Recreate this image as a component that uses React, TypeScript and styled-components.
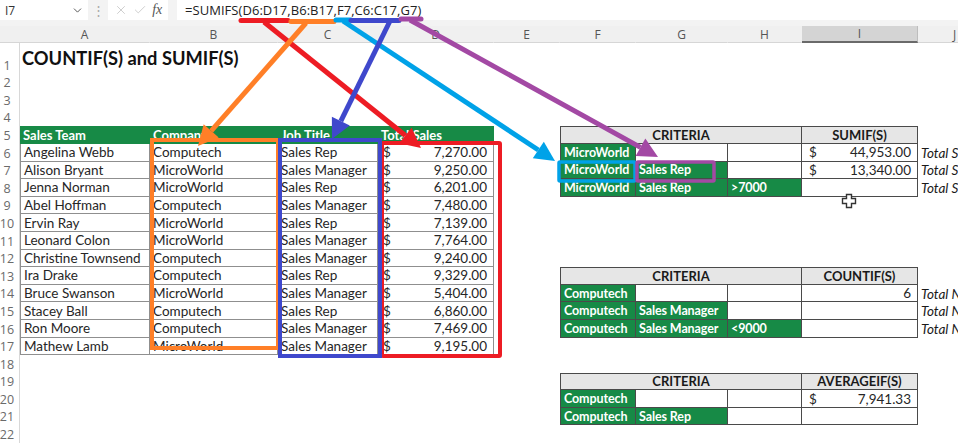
import React from "react";
import styled, { createGlobalStyle } from "styled-components";
import { ChevronDown, X, Check } from "lucide-react";

const Global = createGlobalStyle`
  html, body { margin: 0; padding: 0; background: #fff; overflow: hidden; }
  body { font-family: "Lato", "Open Sans", sans-serif; }
`;

const COLS = [20, 130, 128, 100, 116, 66, 76, 92, 74, 116, 74];
const LETTERS = ["A", "B", "C", "D", "E", "F", "G", "H", "I", "J"];

const Page = styled.div`
  position: relative;
  width: 958px;
  height: 448px;
  overflow: hidden;
  background: #fff;
`;

const TopBar = styled.div`
  height: 26px;
  background: #f3f3f3;
  display: flex;
  align-items: flex-start;
  font-family: "Open Sans", "Liberation Sans", sans-serif;
`;

const NameBox = styled.div`
  width: 88px;
  height: 20px;
  background: #fff;
  display: flex;
  align-items: center;
  justify-content: space-between;
  padding: 0 4px 0 5px;
  box-sizing: border-box;
  font-size: 12px;
  color: #333;
`;

const Dots = styled.div`
  width: 20px;
  height: 20px;
  display: flex;
  align-items: center;
  justify-content: center;
  color: #a8a8a8;
  font-size: 13px;
`;

const FnBox = styled.div`
  width: 60px;
  height: 20px;
  background: #fff;
  display: flex;
  align-items: center;
  justify-content: space-around;
  padding: 0 3px;
  box-sizing: border-box;
  color: #c4c4c4;
`;

const Fx = styled.span`
  font-family: "Liberation Serif", serif;
  font-style: italic;
  font-size: 14px;
  color: #555;
`;

const FormulaBox = styled.div`
  flex: 1;
  margin-left: 9px;
  height: 20px;
  background: #fff;
  display: flex;
  align-items: center;
  padding-left: 8px;
  font-size: 13px;
  color: #222;
  letter-spacing: 0.05px;
`;

const Sheet = styled.div`
  display: grid;
  grid-template-columns: ${COLS.map((c) => c + "px").join(" ")};
  grid-template-rows: 17px 30.6px repeat(21, 17.6px);
  width: 992px;
  font-family: "Lato", "Open Sans", sans-serif;
`;

const ColHead = styled.div<{ $c: number; $sel?: boolean }>`
  grid-row: 1;
  grid-column: ${(p) => p.$c};
  background: ${(p) => (p.$sel ? "#d4d4d4" : "#f0f0f0")};
  border-bottom: ${(p) => (p.$sel ? "2px solid #6a6a6a" : "1px solid #d6d6d6")};
  border-right: 1px solid ${(p) => (p.$sel ? "#bdbdbd" : "#f0f0f0")};
  display: flex;
  align-items: center;
  justify-content: center;
  font-size: 12px;
  color: #555;
  font-family: "Open Sans", sans-serif;
`;

const Corner = styled.div`
  grid-row: 1;
  grid-column: 1;
  background: #f0f0f0;
  border-bottom: 1px solid #d6d6d6;
`;

const RowHead = styled.div<{ $r: number }>`
  grid-row: ${(p) => p.$r + 1};
  grid-column: 1;
  border-right: 1px solid #d8d8d8;
  display: flex;
  align-items: flex-end;
  justify-content: center;
  padding: 0 5px 0 0;
  font-size: 12.5px;
  color: #6a6a6a;
  font-family: "Open Sans", sans-serif;
`;

const Title = styled.div`
  grid-row: 2;
  grid-column: 2 / span 4;
  display: flex;
  align-items: center;
  padding-left: 2px;
  font-weight: 700;
  font-size: 18.3px;
  color: #111;
  white-space: nowrap;
`;

const Cell = styled.div<{ $r: number; $c: number; $span?: number }>`
  grid-row: ${(p) => p.$r + 1};
  grid-column: ${(p) => p.$c + 1} / span ${(p) => p.$span ?? 1};
  display: flex;
  align-items: center;
  box-sizing: border-box;
  font-size: 13.5px;
  white-space: nowrap;
  overflow: hidden;
`;

const TableHead = styled(Cell)`
  background: #178a46;
  color: #fff;
  font-weight: 700;
  font-size: 13px;
  padding-left: 3px;
`;

const DataCell = styled(Cell)<{ $first?: boolean }>`
  color: #262626;
  padding-left: 3px;
  border-bottom: 1px solid #8f8f8f;
  border-right: 1px solid #8f8f8f;
  border-left: ${(p) => (p.$first ? "1px solid #8f8f8f" : "none")};
`;

const Money = styled(DataCell)`
  justify-content: space-between;
  padding: 0 6px 0 5px;
`;

const CritHead = styled(Cell)<{ $first?: boolean }>`
  background: #e6e6e6;
  justify-content: center;
  font-weight: 700;
  font-size: 13px;
  color: #1a1a1a;
  border-top: 1px solid #4a4a4a;
  border-bottom: 1px solid #4a4a4a;
  border-right: 1px solid #4a4a4a;
  border-left: ${(p) => (p.$first ? "1px solid #4a4a4a" : "none")};
`;

const CritCell = styled(Cell)<{ $green?: boolean; $first?: boolean }>`
  background: ${(p) => (p.$green ? "#178a46" : "#fff")};
  color: #fff;
  font-weight: 700;
  font-size: 12.5px;
  letter-spacing: -0.1px;
  padding-left: 3px;
  border-bottom: 1px solid #4a4a4a;
  border-right: 1px solid #4a4a4a;
  border-left: ${(p) => (p.$first ? "1px solid #4a4a4a" : "none")};
`;

const ResultCell = styled(Cell)<{ $money?: boolean }>`
  background: #fff;
  color: #262626;
  justify-content: ${(p) => (p.$money ? "space-between" : "flex-end")};
  padding: 0 6px 0 7px;
  border-bottom: 1px solid #4a4a4a;
  border-right: 1px solid #4a4a4a;
`;

const Note = styled(Cell)`
  font-style: italic;
  color: #1a1a1a;
  padding-left: 3px;
`;

const Overlay = styled.svg`
  position: absolute;
  left: 0;
  top: 0;
  pointer-events: none;
`;

const rows: [string, string, string, string][] = [
  ["Angelina Webb", "Computech", "Sales Rep", "7,270.00"],
  ["Alison Bryant", "MicroWorld", "Sales Manager", "9,250.00"],
  ["Jenna Norman", "MicroWorld", "Sales Rep", "6,201.00"],
  ["Abel Hoffman", "Computech", "Sales Manager", "7,480.00"],
  ["Ervin Ray", "MicroWorld", "Sales Rep", "7,139.00"],
  ["Leonard Colon", "MicroWorld", "Sales Manager", "7,764.00"],
  ["Christine Townsend", "Computech", "Sales Manager", "9,240.00"],
  ["Ira Drake", "Computech", "Sales Rep", "9,329.00"],
  ["Bruce Swanson", "MicroWorld", "Sales Manager", "5,404.00"],
  ["Stacey Ball", "Computech", "Sales Rep", "6,860.00"],
  ["Ron Moore", "Computech", "Sales Manager", "7,469.00"],
  ["Mathew Lamb", "MicroWorld", "Sales Manager", "9,195.00"],
];

type Crit = { start: number; head: string; lines: { f: string; g?: string; h?: string; money?: string; plain?: string }[]; note?: string };

const crits: Crit[] = [
  {
    start: 5,
    head: "SUMIF(S)",
    note: "Total S",
    lines: [
      { f: "MicroWorld", money: "44,953.00" },
      { f: "MicroWorld", g: "Sales Rep", money: "13,340.00" },
      { f: "MicroWorld", g: "Sales Rep", h: ">7000" },
    ],
  },
  {
    start: 13,
    head: "COUNTIF(S)",
    note: "Total N",
    lines: [
      { f: "Computech", plain: "6" },
      { f: "Computech", g: "Sales Manager" },
      { f: "Computech", g: "Sales Manager", h: "<9000" },
    ],
  },
  {
    start: 19,
    head: "AVERAGEIF(S)",
    lines: [
      { f: "Computech", money: "7,941.33" },
      { f: "Computech", g: "Sales Rep" },
    ],
  },
];

function arrowHead(x1: number, y1: number, x2: number, y2: number, L = 20, W = 10) {
  const dx = x2 - x1;
  const dy = y2 - y1;
  const len = Math.hypot(dx, dy);
  const ux = dx / len;
  const uy = dy / len;
  const bx = x2 - ux * L;
  const by = y2 - uy * L;
  const px = -uy;
  const py = ux;
  return {
    base: [bx, by],
    points: `${x2},${y2} ${bx + px * W},${by + py * W} ${bx - px * W},${by - py * W}`,
  };
}

const Arrow: React.FC<{ from: [number, number]; to: [number, number]; color: string }> = ({ from, to, color }) => {
  const h = arrowHead(from[0], from[1], to[0], to[1]);
  return (
    <g>
      <line x1={from[0]} y1={from[1]} x2={h.base[0]} y2={h.base[1]} stroke={color} strokeWidth={5} />
      <polygon points={h.points} fill={color} />
    </g>
  );
};

const RED = "#ED1C24";
const ORANGE = "#FF7F27";
const CYAN = "#00A2E8";
const BLUE = "#3F48CC";
const PURPLE = "#A349A4";

export default function App() {
  return (
    <Page>
      <Global />
      <TopBar>
        <NameBox>
          <span>I7</span>
          <ChevronDown size={13} color="#555" strokeWidth={1.8} />
        </NameBox>
        <Dots>⋮</Dots>
        <FnBox>
          <X size={14} strokeWidth={1.4} />
          <Check size={14} strokeWidth={1.4} />
          <Fx>fx</Fx>
        </FnBox>
        <FormulaBox>=SUMIFS(D6:D17,B6:B17,F7,C6:C17,G7)</FormulaBox>
      </TopBar>
      <Sheet>
        <Corner />
        {LETTERS.map((l, i) => (
          <ColHead key={l} $c={i + 2} $sel={l === "I"}>
            {l}
          </ColHead>
        ))}
        {Array.from({ length: 22 }, (_, i) => (
          <RowHead key={i} $r={i + 1}>
            {i + 1}
          </RowHead>
        ))}
        <Title>COUNTIF(S) and SUMIF(S)</Title>

        {["Sales Team", "Company", "Job Title", "Total Sales"].map((h, i) => (
          <TableHead key={h} $r={5} $c={i + 1}>
            {h}
          </TableHead>
        ))}
        {rows.map((r, i) => (
          <React.Fragment key={r[0]}>
            <DataCell $r={6 + i} $c={1} $first>
              {r[0]}
            </DataCell>
            <DataCell $r={6 + i} $c={2}>
              {r[1]}
            </DataCell>
            <DataCell $r={6 + i} $c={3}>
              {r[2]}
            </DataCell>
            <Money $r={6 + i} $c={4}>
              <span>$</span>
              <span>{r[3]}</span>
            </Money>
          </React.Fragment>
        ))}

        {crits.map((t) => (
          <React.Fragment key={t.head}>
            <CritHead $r={t.start} $c={6} $span={3} $first>
              CRITERIA
            </CritHead>
            <CritHead $r={t.start} $c={9}>
              {t.head}
            </CritHead>
            {t.lines.map((l, i) => {
              const r = t.start + 1 + i;
              return (
                <React.Fragment key={i}>
                  <CritCell $r={r} $c={6} $green $first>
                    {l.f}
                  </CritCell>
                  <CritCell $r={r} $c={7} $green={!!l.g}>
                    {l.g}
                  </CritCell>
                  <CritCell $r={r} $c={8} $green={!!l.h}>
                    {l.h}
                  </CritCell>
                  <ResultCell $r={r} $c={9} $money={!!l.money}>
                    {l.money ? (
                      <>
                        <span>$</span>
                        <span>{l.money}</span>
                      </>
                    ) : (
                      l.plain
                    )}
                  </ResultCell>
                  {t.note && (
                    <Note $r={r} $c={10}>
                      {t.note}
                    </Note>
                  )}
                </React.Fragment>
              );
            })}
          </React.Fragment>
        ))}
      </Sheet>

      <Overlay width={958} height={448} viewBox="0 0 958 448">
        <rect x={152} y={140} width={126} height={208} fill="none" stroke={ORANGE} strokeWidth={4} />
        <rect x={382} y={143} width={118} height={213} fill="none" stroke={RED} strokeWidth={4} rx={1} />
        <rect x={280} y={140} width={100} height={216} fill="none" stroke={BLUE} strokeWidth={4} />
        <rect x={559} y={162} width={76} height={19} fill="none" stroke={CYAN} strokeWidth={3.5} rx={1} />
        <rect x={637} y={162} width={77} height={19} fill="none" stroke={PURPLE} strokeWidth={3.5} rx={1} />

        <line x1={241} y1={20.5} x2={288} y2={20.5} stroke={RED} strokeWidth={5} strokeLinecap="round" />
        <line x1={291} y1={21.5} x2={334} y2={21.5} stroke={ORANGE} strokeWidth={5} strokeLinecap="round" />
        <line x1={336} y1={20} x2={351} y2={20} stroke={CYAN} strokeWidth={5} strokeLinecap="round" />
        <line x1={351} y1={20.5} x2={399} y2={20.5} stroke={BLUE} strokeWidth={5} strokeLinecap="round" />
        <line x1={401} y1={19} x2={421} y2={19} stroke={PURPLE} strokeWidth={5} strokeLinecap="round" />

        <Arrow from={[264, 22]} to={[421, 148]} color={RED} />
        <Arrow from={[306, 23]} to={[198, 146]} color={ORANGE} />
        <Arrow from={[343, 21]} to={[555, 161]} color={CYAN} />
        <Arrow from={[390, 21]} to={[332, 139]} color={BLUE} />
        <Arrow from={[410, 20]} to={[658, 157]} color={PURPLE} />

        <path
          d="M846.5 194.5 h5 v4 h4 v5 h-4 v4 h-5 v-4 h-4 v-5 h4 z"
          fill="#fff"
          stroke="#333"
          strokeWidth={1.4}
        />
      </Overlay>
    </Page>
  );
}
